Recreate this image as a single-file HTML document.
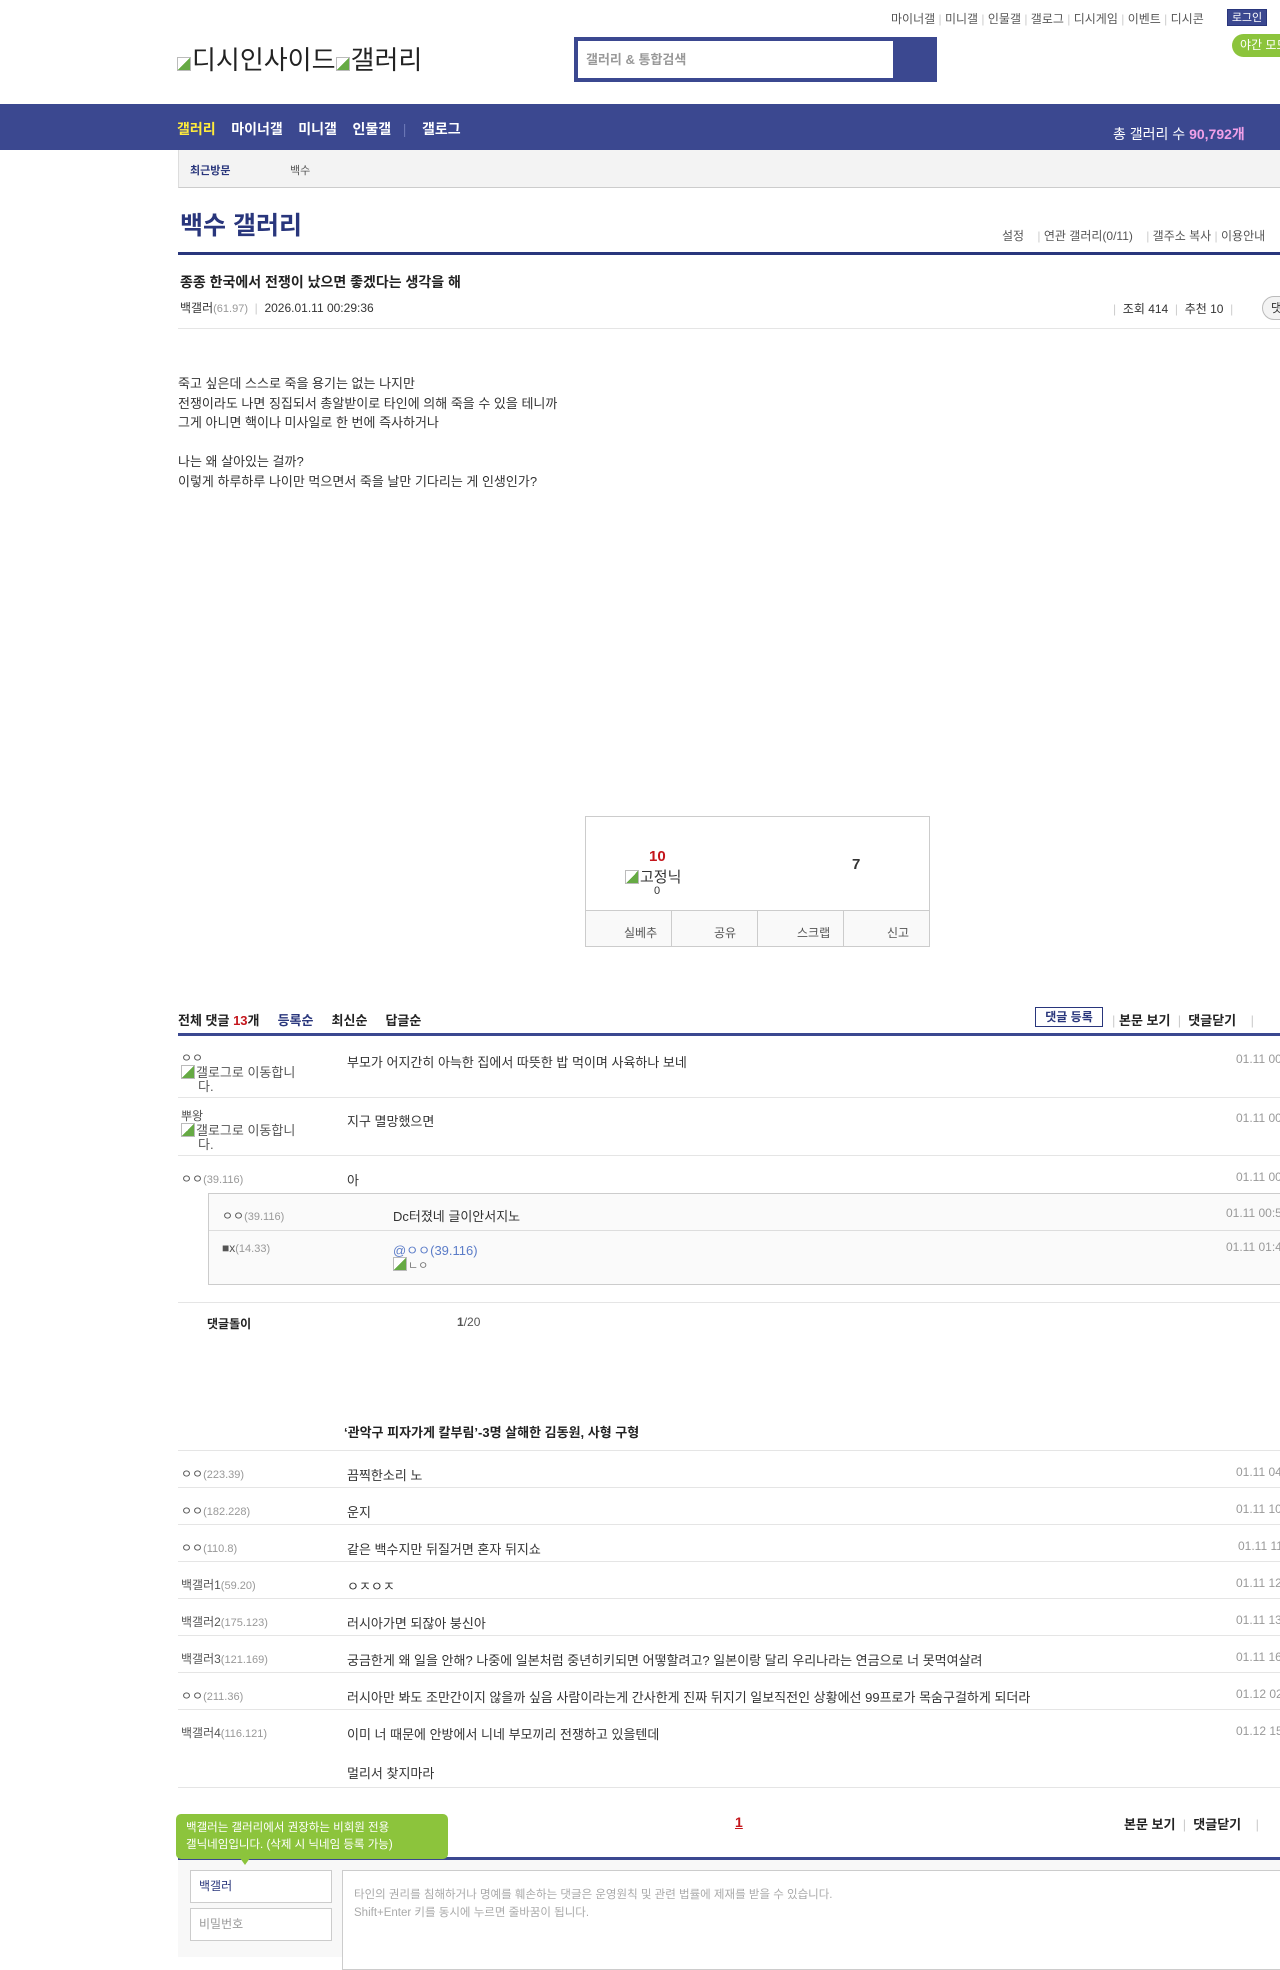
<!DOCTYPE html>
<html><head><meta charset="utf-8">
<style>
*{margin:0;padding:0;box-sizing:border-box}
body{width:1280px;height:1957px;position:relative;overflow:hidden;background:#fff;font-family:"Liberation Sans","Noto Sans CJK KR",sans-serif;color:#333;font-size:13px}
#w{position:absolute;left:0;top:0;width:1280px;height:1957px}
.a{position:absolute;white-space:nowrap}
.g{color:#999;font-size:11px}
.sep{position:absolute;left:178px;width:1102px;height:1px;background:#e5e5e5}
.nm{font-size:12px;color:#555}
.dt{font-size:12px;color:#999}
.bi{display:inline-block;width:14px;height:14px;border:1px solid #bbb;background:linear-gradient(135deg,#fff 50%,#6a4 50%);vertical-align:-2px;margin-right:1px}
</style></head><body><div id="w">
<div class="a" style="left:891px;top:10px;font-size:12px;color:#555">마이너갤 <span style="color:#ccc">|</span> 미니갤 <span style="color:#ccc">|</span> 인물갤 <span style="color:#ccc">|</span> 갤로그 <span style="color:#ccc">|</span> 디시게임 <span style="color:#ccc">|</span> 이벤트 <span style="color:#ccc">|</span> 디시콘</div>
<div class="a" style="left:1227px;top:9px;width:40px;height:17px;background:#3b4890;color:#fff;font-size:11px;text-align:center;line-height:17px;border:1px solid #29367c">로그인</div>
<div class="a" style="left:1232px;top:34px;width:60px;height:23px;background:#8cc43c;border-radius:12px;color:#fff;font-size:12px;line-height:23px;padding-left:8px">야간 모드</div>
<div class="a" style="left:177px;top:40px;font-size:26px;color:#222"><span class="bi"></span>디시인사이드<span class="bi"></span>갤러리</div>
<div class="a" style="left:574px;top:37px;width:363px;height:45px;background:#3b4890"></div>
<div class="a" style="left:578px;top:41px;width:315px;height:37px;background:#fff;color:#999;font-size:13px;line-height:37px;padding-left:8px;font-weight:bold">갤러리 &amp; 통합검색</div>
<div class="a" style="left:0;top:104px;width:1280px;height:46px;background:#3b4890"></div>
<div class="a" style="left:177px;top:119px;font-size:14px;font-weight:bold;color:#fff"><span style="color:#ffeb3b">갤러리</span>&nbsp;&nbsp;&nbsp; 마이너갤&nbsp;&nbsp;&nbsp; 미니갤&nbsp;&nbsp;&nbsp; 인물갤 &nbsp;&nbsp;<span style="color:#6a76b5;font-weight:normal">|</span>&nbsp;&nbsp;&nbsp; 갤로그</div>
<div class="a" style="left:1113px;top:124px;font-size:14px;color:#fff">총 갤러리 수 <b style="color:#f0a0e8">90,792개</b></div>
<div class="a" style="left:178px;top:150px;width:1102px;height:38px;background:#f3f3f3;border-bottom:1px solid #ccc;border-left:1px solid #ddd"></div>
<div class="a" style="left:190px;top:162px;font-size:11px;font-weight:bold;color:#29367c">최근방문</div>
<div class="a" style="left:290px;top:162px;font-size:11px;color:#555">백수</div>
<div class="a" style="left:180px;top:206px;font-size:25px;font-weight:bold;color:#29367c">백수 갤러리</div>
<div class="a" style="left:1002px;top:227px;font-size:12px;color:#555">설정 &nbsp;&nbsp; <span style="color:#ccc">|</span> 연관 갤러리(0/11) &nbsp;&nbsp;&nbsp;<span style="color:#ccc">|</span> 갤주소 복사 <span style="color:#ccc">|</span> 이용안내</div>
<div class="a" style="left:178px;top:252px;width:1102px;height:3px;background:#29367c"></div>
<div class="a" style="left:180px;top:272px;font-size:14px;font-weight:bold;color:#222">종종 한국에서 전쟁이 났으면 좋겠다는 생각을 해</div>
<div class="a" style="left:180px;top:299px;font-size:12px;color:#333">백갤러<span class="g">(61.97)</span> <span style="color:#ccc">&nbsp;|&nbsp;</span> 2026.01.11 00:29:36</div>
<div class="a" style="left:1113px;top:300px;font-size:12px;color:#333"><span style="color:#ccc">|</span>&nbsp; 조회 414 &nbsp;<span style="color:#ccc">|</span>&nbsp; 추천 10 &nbsp;<span style="color:#ccc">|</span></div>
<div class="a" style="left:1262px;top:296px;width:40px;height:24px;border:1px solid #bbb;border-radius:12px;background:#f3f3f3;font-size:12px;line-height:22px;padding-left:8px">댓</div>
<div class="sep" style="top:328px"></div>
<div class="a" style="left:178px;top:374px;font-size:13px;line-height:19.6px;color:#333">죽고 싶은데 스스로 죽을 용기는 없는 나지만<br>전쟁이라도 나면 징집되서 총알받이로 타인에 의해 죽을 수 있을 테니까<br>그게 아니면 핵이나 미사일로 한 번에 즉사하거나<br><br>나는 왜 살아있는 걸까?<br>이렇게 하루하루 나이만 먹으면서 죽을 날만 기다리는 게 인생인가?</div>
<div class="a" style="left:585px;top:816px;width:345px;height:131px;border:1px solid #ccc"></div>
<div class="a" style="left:585px;top:910px;width:345px;height:37px;background:#f9f9f9;border:1px solid #ccc"></div>
<div class="a" style="left:671px;top:910px;width:1px;height:37px;background:#ccc"></div>
<div class="a" style="left:757px;top:910px;width:1px;height:37px;background:#ccc"></div>
<div class="a" style="left:843px;top:910px;width:1px;height:37px;background:#ccc"></div>
<div class="a" style="left:649px;top:848px;font-size:15px;font-weight:bold;color:#c4161c">10</div>
<div class="a" style="left:625px;top:866px;font-size:15px;color:#333"><span class="bi"></span>고정닉</div>
<div class="a" style="left:654px;top:885px;font-size:11px;color:#333">0</div>
<div class="a" style="left:852px;top:856px;font-size:15px;font-weight:bold;color:#333">7</div>
<div class="a" style="left:624px;top:924px;font-size:12px;color:#555">실베추</div>
<div class="a" style="left:714px;top:924px;font-size:12px;color:#555">공유</div>
<div class="a" style="left:797px;top:924px;font-size:12px;color:#555">스크랩</div>
<div class="a" style="left:887px;top:924px;font-size:12px;color:#555">신고</div>
<div class="a" style="left:178px;top:1010px;font-size:13px;font-weight:bold;color:#222">전체 댓글 <span style="color:#c4161c">13</span>개 &nbsp;&nbsp;&nbsp;&nbsp;<span style="color:#29367c">등록순</span> &nbsp;&nbsp;&nbsp;&nbsp;최신순 &nbsp;&nbsp;&nbsp;&nbsp;답글순</div>
<div class="a" style="left:1035px;top:1007px;width:68px;height:20px;border:1px solid #29367c;font-size:12px;font-weight:bold;color:#29367c;text-align:center;line-height:18px">댓글 등록</div>
<div class="a" style="left:1112px;top:1010px;font-size:13px;font-weight:bold;color:#222"><span style="color:#ccc;font-weight:normal">|</span> 본문 보기 &nbsp;<span style="color:#ccc;font-weight:normal">|</span>&nbsp; 댓글닫기 &nbsp;&nbsp;&nbsp;<span style="color:#ccc;font-weight:normal">|</span></div>
<div class="a" style="left:178px;top:1033px;width:1102px;height:3px;background:#3b4890"></div>
<div class="a nm" style="left:181px;top:1051px;line-height:14px">ㅇㅇ<br><span style="font-size:13px"><span class="bi"></span>갤로그로 이동합니</span><br><span style="font-size:13px;padding-left:17px">다.</span></div>
<div class="a" style="left:347px;top:1052px">부모가 어지간히 아늑한 집에서 따뜻한 밥 먹이며 사육하나 보네</div>
<div class="a dt" style="left:1236px;top:1052px">01.11 00:31:00</div>
<div class="sep" style="top:1097px"></div>
<div class="a nm" style="left:181px;top:1109px;line-height:14px">뿌왕<br><span style="font-size:13px"><span class="bi"></span>갤로그로 이동합니</span><br><span style="font-size:13px;padding-left:17px">다.</span></div>
<div class="a" style="left:347px;top:1111px">지구 멸망했으면</div>
<div class="a dt" style="left:1236px;top:1111px">01.11 00:33:12</div>
<div class="sep" style="top:1155px"></div>
<div class="a nm" style="left:181px;top:1170px">ㅇㅇ<span class="g">(39.116)</span></div>
<div class="a" style="left:347px;top:1170px">아</div>
<div class="a dt" style="left:1236px;top:1170px">01.11 00:45:10</div>
<div class="a" style="left:208px;top:1193px;width:1080px;height:92px;background:#fafafa;border:1px solid #ccc"></div>
<div class="a" style="left:209px;top:1230px;width:1071px;height:1px;background:#ddd"></div>
<div class="a nm" style="left:222px;top:1207px">ㅇㅇ<span class="g">(39.116)</span></div>
<div class="a" style="left:393px;top:1206px">Dc터졌네 글이안서지노</div>
<div class="a dt" style="left:1226px;top:1206px">01.11 00:55:34</div>
<div class="a nm" style="left:222px;top:1241px">■x<span class="g">(14.33)</span></div>
<div class="a" style="left:393px;top:1240px;color:#5b7cc8">@ㅇㅇ(39.116)</div>
<div class="a" style="left:393px;top:1257px;font-size:11px;color:#777"><span class="bi"></span>ㄴㅇ</div>
<div class="a dt" style="left:1226px;top:1240px">01.11 01:48:22</div>
<div class="sep" style="top:1302px"></div>
<div class="a" style="left:207px;top:1315px;font-size:12px;font-weight:bold;color:#222">댓글돌이</div>
<div class="a" style="left:457px;top:1315px;font-size:12px;color:#555"><b>1</b>/20</div>
<div class="a" style="left:344px;top:1422px;font-size:13px;font-weight:bold;color:#222">‘관악구 피자가게 칼부림’-3명 살해한 김동원, 사형 구형</div>
<div class="sep" style="top:1450px"></div>
<div class="a nm" style="left:181px;top:1465px">ㅇㅇ<span class="g">(223.39)</span></div><div class="a" style="left:347px;top:1465px">끔찍한소리 노</div><div class="a dt" style="left:1236px;top:1465px">01.11 04:10:21</div>
<div class="sep" style="top:1487px"></div>
<div class="a nm" style="left:181px;top:1502px">ㅇㅇ<span class="g">(182.228)</span></div><div class="a" style="left:347px;top:1502px">운지</div><div class="a dt" style="left:1236px;top:1502px">01.11 10:21:41</div>
<div class="sep" style="top:1524px"></div>
<div class="a nm" style="left:181px;top:1539px">ㅇㅇ<span class="g">(110.8)</span></div><div class="a" style="left:347px;top:1539px">같은 백수지만 뒤질거면 혼자 뒤지쇼</div><div class="a dt" style="left:1238px;top:1539px">01.11 11:02:33</div>
<div class="sep" style="top:1561px"></div>
<div class="a nm" style="left:181px;top:1576px">백갤러1<span class="g">(59.20)</span></div><div class="a" style="left:347px;top:1576px">ㅇㅈㅇㅈ</div><div class="a dt" style="left:1236px;top:1576px">01.11 12:44:10</div>
<div class="sep" style="top:1598px"></div>
<div class="a nm" style="left:181px;top:1613px">백갤러2<span class="g">(175.123)</span></div><div class="a" style="left:347px;top:1613px">러시아가면 되잖아 붕신아</div><div class="a dt" style="left:1236px;top:1613px">01.11 13:20:19</div>
<div class="sep" style="top:1635px"></div>
<div class="a nm" style="left:181px;top:1650px">백갤러3<span class="g">(121.169)</span></div><div class="a" style="left:347px;top:1650px">궁금한게 왜 일을 안해? 나중에 일본처럼 중년히키되면 어떻할려고? 일본이랑 달리 우리나라는 연금으로 너 못먹여살려</div><div class="a dt" style="left:1236px;top:1650px">01.11 16:32:05</div>
<div class="sep" style="top:1672px"></div>
<div class="a nm" style="left:181px;top:1687px">ㅇㅇ<span class="g">(211.36)</span></div><div class="a" style="left:347px;top:1687px">러시아만 봐도 조만간이지 않을까 싶음 사람이라는게 간사한게 진짜 뒤지기 일보직전인 상황에선 99프로가 목숨구걸하게 되더라</div><div class="a dt" style="left:1236px;top:1687px">01.12 02:11:47</div>
<div class="sep" style="top:1709px"></div>
<div class="a nm" style="left:181px;top:1724px">백갤러4<span class="g">(116.121)</span></div><div class="a" style="left:347px;top:1724px">이미 너 때문에 안방에서 니네 부모끼리 전쟁하고 있을텐데</div><div class="a dt" style="left:1236px;top:1724px">01.12 15:30:12</div>
<div class="a" style="left:347px;top:1763px">멀리서 찾지마라</div>
<div class="sep" style="top:1787px"></div>
<div class="a" style="left:735px;top:1814px;font-size:14px;font-weight:bold;color:#c4161c;text-decoration:underline">1</div>
<div class="a" style="left:1124px;top:1814px;font-size:13px;font-weight:bold;color:#222">본문 보기 &nbsp;<span style="color:#ccc;font-weight:normal">|</span>&nbsp; 댓글닫기 &nbsp;&nbsp;&nbsp;<span style="color:#ccc;font-weight:normal">|</span></div>
<div class="a" style="left:178px;top:1857px;width:1102px;height:3px;background:#3b4890"></div>
<div class="a" style="left:178px;top:1860px;width:1102px;height:97px;background:#f8f8f8"></div>
<div class="a" style="left:176px;top:1814px;width:272px;height:45px;background:#8cc43c;border-radius:5px;color:#fff;font-size:11.5px;line-height:17px;padding:6px 10px">백갤러는 갤러리에서 권장하는 비회원 전용<br>갤닉네임입니다. (삭제 시 닉네임 등록 가능)</div>
<div class="a" style="left:240px;top:1858px;width:0;height:0;border-left:5px solid transparent;border-right:5px solid transparent;border-top:7px solid #8cc43c"></div>
<div class="a" style="left:190px;top:1870px;width:142px;height:33px;background:#fff;border:1px solid #ccc;font-size:12px;color:#29367c;line-height:31px;padding-left:8px">백갤러</div>
<div class="a" style="left:190px;top:1908px;width:142px;height:33px;background:#fff;border:1px solid #ccc;font-size:12px;color:#999;line-height:31px;padding-left:8px">비밀번호</div>
<div class="a" style="left:342px;top:1870px;width:950px;height:100px;background:#fff;border:1px solid #ccc"></div>
<div class="a" style="left:354px;top:1886px;font-size:11.5px;color:#aaa;line-height:18px">타인의 권리를 침해하거나 명예를 훼손하는 댓글은 운영원칙 및 관련 법률에 제재를 받을 수 있습니다.<br>Shift+Enter 키를 동시에 누르면 줄바꿈이 됩니다.</div>
</div></body></html>
